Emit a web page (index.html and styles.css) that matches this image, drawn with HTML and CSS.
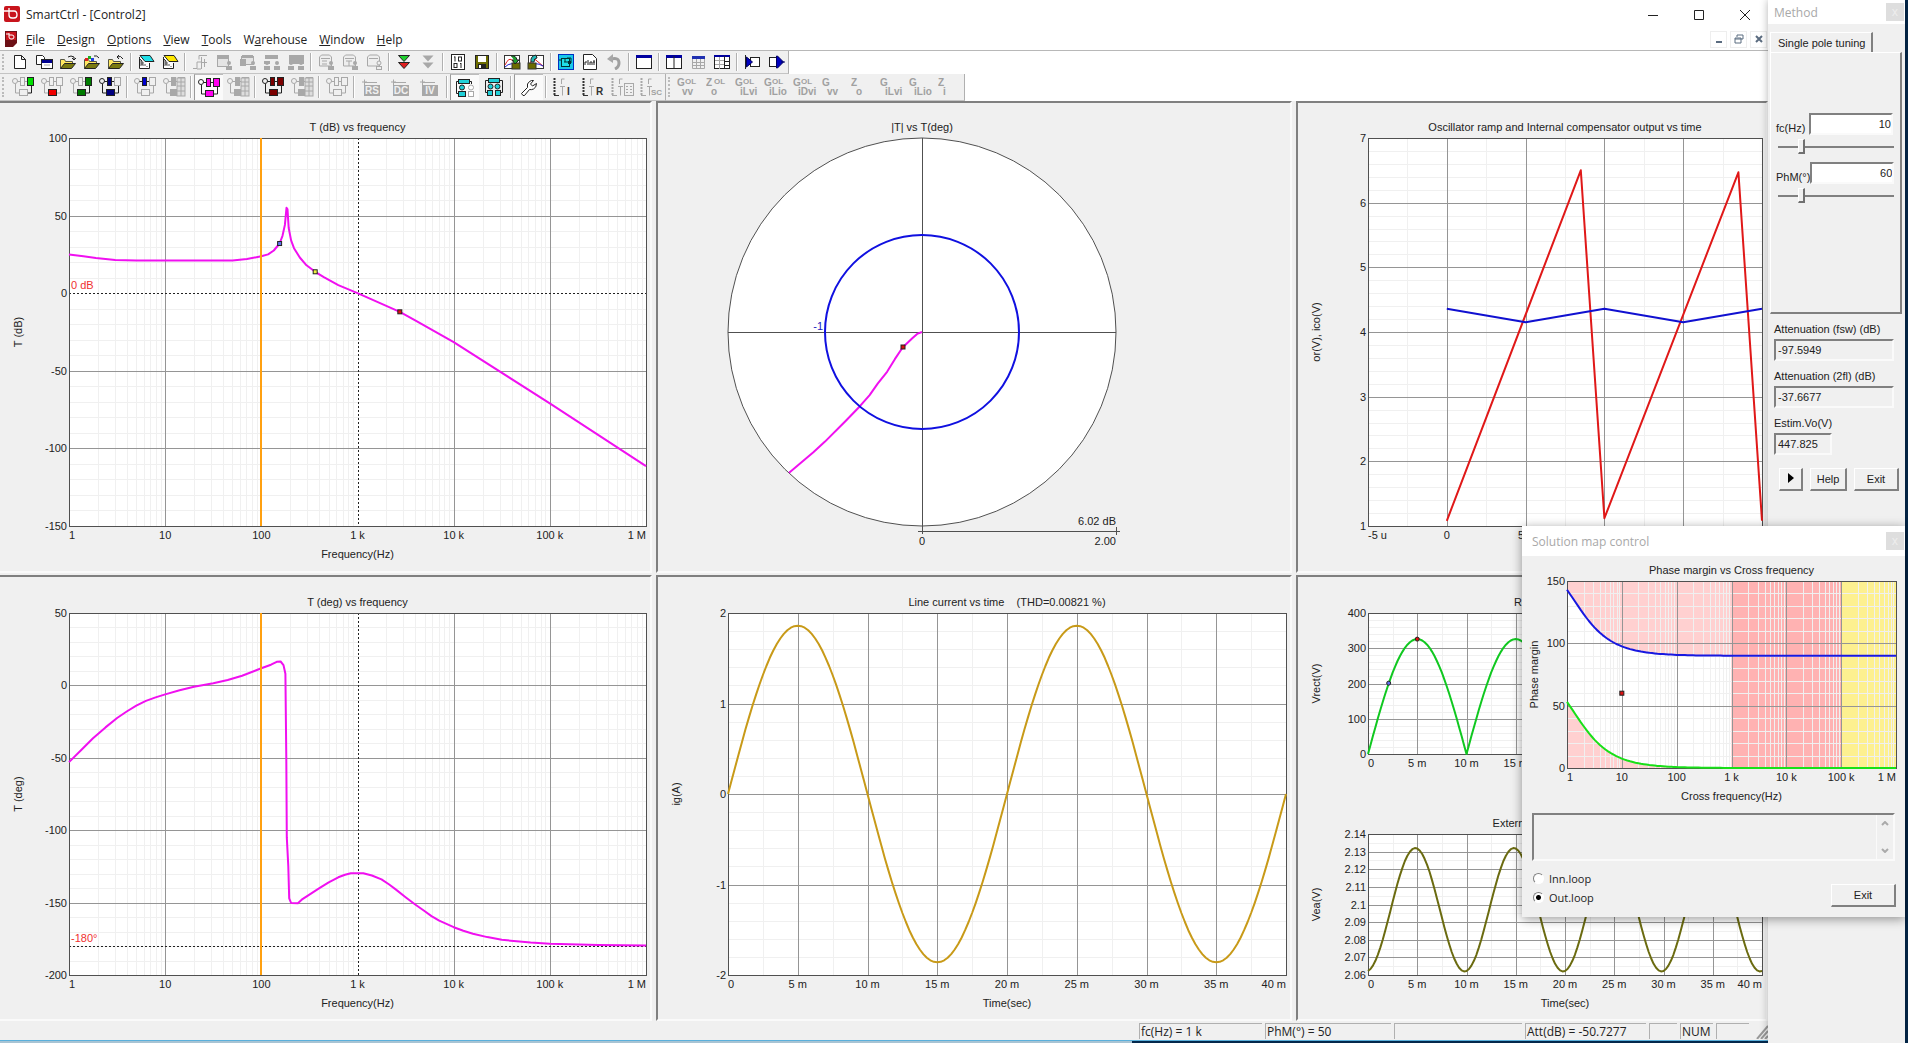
FILE: index.html
```html
<!DOCTYPE html>
<html lang="en">
<head>
  <meta charset="UTF-8">
  <meta name="viewport" content="width=device-width, initial-scale=1.0">
  <title>SmartCtrl - [Control2]</title>
  <link rel="stylesheet" href="styles.css">
</head>
<body>
  <div class="desktop">
    <main class="app">
      <header class="titlebar">
        <svg class="logo" viewBox="0 0 16 16"><rect width="16" height="16" rx="2" fill="#c8141c"/><path d="M0 5h5M5 2v7q0 3 3 3h2q3 0 3-3 0-4-3-4H5" fill="none" stroke="#fff" stroke-width="1.3"/></svg>
        <h1>SmartCtrl - [Control2]</h1>
        <div class="window-buttons">
          <button aria-label="Minimize"><svg viewBox="0 0 12 12"><path d="M1 6.5h10"/></svg></button>
          <button aria-label="Maximize"><svg viewBox="0 0 12 12"><path d="M1.5 1.5h9v9h-9z"/></svg></button>
          <button aria-label="Close"><svg viewBox="0 0 12 12"><path d="M1 1l10 10M11 1L1 11"/></svg></button>
        </div>
      </header>

      <nav class="menubar">
        <svg class="doc-logo" viewBox="0 0 12 16"><path d="M0 0h12v12l-4 4H0z" fill="#6c1016"/><path d="M1 1h10v8H1z" fill="#c8141c"/><path d="M1 3h3M4 2v4q0 2 2 2h1q2 0 2-2T7 4H4" fill="none" stroke="#fff"/></svg>
        <a href="#"><u>F</u>ile</a>
        <a href="#"><u>D</u>esign</a>
        <a href="#"><u>O</u>ptions</a>
        <a href="#"><u>V</u>iew</a>
        <a href="#"><u>T</u>ools</a>
        <a href="#">W<u>a</u>rehouse</a>
        <a href="#"><u>W</u>indow</a>
        <a href="#"><u>H</u>elp</a>
        <div class="mdi-buttons">
          <button aria-label="Minimize document"><svg viewBox="0 0 10 10"><path d="M2 8h6"/></svg></button>
          <button aria-label="Restore document"><svg viewBox="0 0 10 10"><path d="M3 3V1h6v4H7M1 4h6v5H1zM1 5h6" stroke-width="1"/></svg></button>
          <button aria-label="Close document"><svg viewBox="0 0 10 10"><path d="M2 2l6 6M8 2L2 8"/></svg></button>
        </div>
      </nav>

      <div class="toolbars">
        <div class="toolbar small" data-icons="new newWin open openMix openBack | sheetCyan sheetYellow | step mod1 mod2 mod3 mod4 | rep1 rep2 rep3 | arrows arrowsOff | bits save | chartOut chartIn | board script undo | win1 | win2 table win3 | plugL plugR"></div>
        <div class="toolbar-row">
          <div class="toolbar large" data-icons="treeGreen treeRed treeDark treeNavy | treeBlue gridOff | treeMagenta* gridOff | treeMaroon gridOff | treeOff | boxRS boxDC boxIV | cyan1* cyan2 | wrench* | axisI axisR axisGrid axisSC"></div>
          <div class="toolbar large" data-icons="g:G:OL:vv g:Z:OL:o g:G:OL:iLvi g:G:OL:iLio g:G:OL:iDvi g:G::vv g:Z::o g:G::iLvi g:G::iLio g:Z::i"></div>
        </div>
      </div>

      <section class="panels">
        <div class="panel"><svg class="chart" data-chart="gain"></svg></div>
        <div class="panel"><svg class="chart" data-chart="polar"></svg></div>
        <div class="panel"><svg class="chart" data-chart="ramp"></svg></div>
        <div class="panel"><svg class="chart" data-chart="phase"></svg></div>
        <div class="panel"><svg class="chart" data-chart="line"></svg></div>
        <div class="panel">
          <svg class="chart" data-chart="vrect"></svg>
          <svg class="chart" data-chart="vea"></svg>
        </div>
      </section>

      <footer class="statusbar">
        <span class="cell fc">fc(Hz) = 1 k</span>
        <span class="cell phm">PhM(°) = 50</span>
        <span class="cell spare"></span>
        <span class="cell att">Att(dB) = -50.7277</span>
        <span class="cell tiny"></span>
        <span class="cell key">NUM</span>
        <span class="cell key"></span>
        <svg class="size-grip" viewBox="0 0 12 14"><path d="M1 14L12 1M5 14l7-8M9 14l3-3" stroke="#999" stroke-width="2"/></svg>
      </footer>
      <div class="taskbar"></div>
    </main>

    <aside class="method">
      <div class="tool-title"><h2>Method</h2><button aria-label="Close">x</button></div>
      <div class="tabs"><button class="tab">Single pole tuning</button></div>
      <div class="tab-page">
        <div class="tuning">
          <label for="fc">fc(Hz)</label>
          <input type="text" id="fc" value="10">
        </div>
        <input type="range" aria-label="fc slider" min="0" max="100" value="18">
        <div class="tuning">
          <label for="phm">PhM(°)</label>
          <input type="text" id="phm" value="60">
        </div>
        <input type="range" aria-label="PhM slider" min="0" max="100" value="18">
      </div>
      <div class="results">
        <label for="attFsw">Attenuation (fsw) (dB)</label>
        <input type="text" id="attFsw" value="-97.5949" readonly>
        <label for="att2fl">Attenuation (2fl) (dB)</label>
        <input type="text" id="att2fl" value="-37.6677" readonly>
        <label for="estVo">Estim.Vo(V)</label>
        <input type="text" id="estVo" class="short" value="447.825" readonly>
      </div>
      <div class="actions">
        <button class="push play" aria-label="Run"><svg viewBox="0 0 6 10"><path d="M0 0l6 5-6 5z"/></svg></button>
        <button class="push help">Help</button>
        <button class="push exit">Exit</button>
      </div>
    </aside>

    <section class="solution">
      <div class="tool-title"><h2>Solution map control</h2><button aria-label="Close">x</button></div>
      <svg class="chart map" data-chart="map"></svg>
      <div class="log">
        <textarea aria-label="Messages" readonly></textarea>
        <div class="scroll">
          <svg viewBox="0 0 8 5"><path d="M1 4l3-3 3 3"/></svg>
          <svg viewBox="0 0 8 5"><path d="M1 1l3 3 3-3"/></svg>
        </div>
      </div>
      <div class="loops">
        <div class="radios">
          <label><input type="radio" name="loop"> Inn.loop</label>
          <label><input type="radio" name="loop" checked> Out.loop</label>
        </div>
        <button class="push">Exit</button>
      </div>
    </section>
  </div>
  <script src="script.js"></script>
</body>
</html>
```
FILE: styles.css
```css
* {
  box-sizing: border-box;
}

body {
  margin: 0;
  font-family: "Liberation Sans", Arial, sans-serif;
  font-size: 11px;
  color: #222;
  background: #04284c;
}

button,
input,
textarea {
  font: inherit;
  color: inherit;
}

h1,
h2 {
  margin: 0;
  font-weight: normal;
}

.desktop {
  position: relative;
  display: flex;
  height: 100vh;
  padding-right: 3px;
  overflow: hidden;
}

/* main window */
.app {
  flex: 1;
  min-width: 0;
  display: flex;
  flex-direction: column;
  background: #fff;
}

.titlebar,
.menubar,
.statusbar,
.tool-title {
  font-family: "Open Sans", "Noto Sans", sans-serif;
  font-size: 12px;
}

.titlebar {
  display: flex;
  align-items: center;
  height: 28px;
  padding: 0 0 0 4px;
}

.titlebar h1 {
  flex: 1;
  font-size: 12px;
  margin-left: 6px;
}

.logo {
  width: 16px;
  height: 16px;
}

.window-buttons {
  display: flex;
}

.window-buttons button {
  width: 46px;
  height: 28px;
  padding: 0;
  border: 0;
  background: none;
}

.window-buttons svg {
  width: 12px;
  height: 12px;
  fill: none;
  stroke: #222;
  vertical-align: middle;
}

.menubar {
  display: flex;
  align-items: center;
  height: 22px;
  padding: 0 1px 0 5px;
}

.menubar a {
  padding: 0 6px;
  color: #222;
  text-decoration: none;
}

.doc-logo {
  width: 12px;
  height: 16px;
  margin-right: 3px;
}

.mdi-buttons {
  display: flex;
  gap: 3px;
  margin-left: auto;
}

.mdi-buttons button {
  width: 17px;
  height: 17px;
  padding: 0;
  border: 1px solid #eee;
  background: #fff;
  line-height: 0;
}

.mdi-buttons svg {
  width: 10px;
  height: 10px;
  fill: none;
  stroke: #5b6c80;
  stroke-width: 2;
}

/* toolbars */
.toolbars {
  border-top: 1px solid #b8b8b8;
}

.toolbar-row {
  display: flex;
}

.toolbar {
  display: flex;
  width: max-content;
  background: #f0f0f0;
  border-right: 1px solid #b0b0b0;
  border-bottom: 1px solid #c4c4c4;
}

.toolbar::before {
  content: "";
  width: 3px;
  margin: 3px 1px 3px 2px;
  border-left: 2px dotted #bbb;
}

.toolbar button {
  display: flex;
  align-items: center;
  justify-content: center;
  padding: 0;
  border: 0;
  background: none;
}

.toolbar .pressed {
  background: #fafafa;
  border-left: 1px solid #999;
  border-top: 1px solid #bbb;
}

.small button {
  width: 24px;
  height: 22px;
}

.small svg {
  width: 18px;
  height: 16px;
}

.large button {
  width: 29px;
  height: 26px;
}

.large svg {
  width: 24px;
  height: 20px;
}

.separator {
  width: 2px;
  margin: 2px;
  border-left: 1px solid #b0b0b0;
  background: #fff;
}

.toolbar text {
  font-size: 10px;
  font-weight: bold;
  fill: #a0a0a0;
}

.toolbar .sup {
  font-size: 8px;
}

/* chart panels */
.panels {
  flex: 1;
  min-height: 0;
  display: grid;
  grid-template-columns: 652fr 636fr 472fr;
  grid-template-rows: 472fr 446fr;
  gap: 2px 4px;
  background: #f0f0f0;
}

.panel {
  display: flex;
  flex-direction: column;
  min-width: 0;
  min-height: 0;
  overflow: hidden;
  border: 2px solid;
  border-color: #808080 #fafafa #fafafa #808080;
}

.panel:nth-child(3n + 1) {
  border-left: 0;
}

.chart {
  display: block;
  flex: 1;
  width: 100%;
  min-height: 0;
}

.chart text {
  font-size: 11px;
  fill: #222;
}

.chart .red-text {
  fill: #f03030;
}

.chart .blue-text {
  fill: #2020c0;
}

.chart .minor,
.chart .major,
.chart .frame,
.chart .dotted {
  fill: none;
  shape-rendering: crispEdges;
}

.chart .minor {
  stroke: #f0f0f0;
}

.chart .major {
  stroke: #959595;
}

.chart .frame {
  stroke: #505050;
}

.chart .dotted {
  stroke: #222;
  stroke-dasharray: 2 2;
}

.chart .curve {
  fill: none;
  stroke-width: 2;
  stroke-linejoin: round;
}

/* status bar */
.statusbar {
  display: flex;
  justify-content: flex-end;
  gap: 3px;
  height: 19px;
  padding: 2px 0 1px;
  background: #f0f0f0;
}

.cell {
  padding-left: 1px;
  border-left: 1px solid #b0b0b0;
  border-top: 1px solid #b0b0b0;
  line-height: 15px;
  white-space: nowrap;
}

.fc {
  width: 123px;
}

.phm {
  width: 126px;
}

.spare {
  width: 128px;
}

.att {
  width: 121px;
}

.tiny {
  width: 28px;
}

.key {
  width: 33px;
}

.size-grip {
  width: 12px;
  height: 14px;
  margin-left: 4px;
  align-self: flex-end;
}

.taskbar {
  height: 3px;
  border-top: 1px solid #5ab0dc;
  background: linear-gradient(90deg, #a8c4d4 64%, #04284c 64%);
}

/* method window */
.method {
  width: 137px;
  background: #f0f0f0;
  box-shadow: 0 0 8px rgba(0, 0, 0, 0.3);
}

.tool-title {
  display: flex;
  align-items: center;
  justify-content: space-between;
  height: 24px;
  padding: 0 1px 0 6px;
  background: #fff;
  color: #a8a8a8;
}

.tool-title h2 {
  font-size: 12px;
}

.tool-title button {
  width: 18px;
  height: 18px;
  padding: 0;
  border: 0;
  background: #dedede;
  color: #eee;
  line-height: 16px;
}

.tabs {
  padding: 8px 2px 0;
}

.tab {
  height: 20px;
  padding: 0 6px 0 7px;
  border: 0;
  border-left: 1px solid #fff;
  border-top: 1px solid #fff;
  border-right: 2px solid #808080;
  background: #f0f0f0;
}

.tab-page {
  height: 262px;
  margin: 0 3px 0 2px;
  padding: 60px 7px 0 5px;
  border: 1px solid #fff;
  border-right: 2px solid #808080;
  border-bottom: 2px solid #808080;
}

.tuning {
  display: flex;
  align-items: flex-end;
  justify-content: space-between;
}

.method input[type="text"] {
  height: 22px;
  padding: 0 2px;
  border: 2px solid;
  border-color: #808080 #fafafa #fafafa #808080;
  border-radius: 0;
  background: #fff;
}

.tuning input[type="text"] {
  width: 84px;
  padding-right: 0;
  text-align: right;
}

.tab-page label {
  padding-bottom: 1px;
  white-space: nowrap;
}

input[type="range"] {
  display: block;
  appearance: none;
  width: 116px;
  height: 15px;
  margin: 4px 0 8px 2px;
  background: linear-gradient(#808080, #808080) center / 100% 2px no-repeat;
}

input[type="range"]::-webkit-slider-thumb {
  appearance: none;
  width: 7px;
  height: 15px;
  border: 1px solid #fff;
  border-right: 2px solid #707070;
  border-bottom: 2px solid #707070;
  background: #f0f0f0;
}

.results {
  display: flex;
  flex-direction: column;
  align-items: flex-start;
  padding: 9px 9px 0 6px;
}

.results label {
  line-height: 13px;
  margin-bottom: 3px;
}

.results input[type="text"] {
  width: 120px;
  margin-bottom: 9px;
  background: #f0f0f0;
}

.results input.short {
  width: 58px;
}

.actions {
  display: flex;
  justify-content: space-between;
  padding: 4px 6px 0 11px;
}

.push {
  height: 23px;
  padding: 0;
  border: 1px solid #fff;
  border-right: 2px solid #808080;
  border-bottom: 2px solid #808080;
  background: #f0f0f0;
}

.play {
  width: 24px;
}

.play svg {
  width: 6px;
  height: 10px;
  fill: #000;
}

.help {
  width: 37px;
}

.exit {
  width: 45px;
}

/* solution map window, floats over the charts */
.solution {
  position: absolute;
  top: 526px;
  right: 3px;
  width: 383px;
  background: #f0f0f0;
  box-shadow: 0 2px 10px rgba(0, 0, 0, 0.4);
}

.solution .tool-title {
  height: 30px;
  padding-left: 10px;
}

.chart.map {
  height: 257px;
}

.log {
  display: flex;
  height: 48px;
  margin: 0 10px;
  border: 2px solid;
  border-color: #808080 #fafafa #fafafa #808080;
}

.log textarea {
  flex: 1;
  min-width: 0;
  padding: 0;
  border: 0;
  resize: none;
  background: #f0f0f0;
}

.scroll {
  display: flex;
  flex-direction: column;
  justify-content: space-between;
  width: 17px;
  padding: 6px 4px;
  border-left: 1px solid #fafafa;
}

.scroll svg {
  width: 8px;
  height: 5px;
  fill: none;
  stroke: #aaa;
  stroke-width: 2;
}

.loops {
  display: flex;
  justify-content: space-between;
  align-items: flex-end;
  padding: 8px 9px 10px 11px;
}

.loops .push {
  width: 65px;
}

.radios {
  display: flex;
  flex-direction: column;
  font-family: "Open Sans", "Noto Sans", sans-serif;
}

.radios label {
  display: flex;
  align-items: center;
  gap: 5px;
  height: 19px;
}

input[type="radio"] {
  appearance: none;
  width: 11px;
  height: 11px;
  margin: 0;
  border: 1px solid;
  border-color: #808080 #fff #fff #808080;
  border-radius: 50%;
  background: #fff;
}

input[type="radio"]:checked {
  background: radial-gradient(#000 2px, #fff 3px);
}
```
FILE: script.js
```js
// ---------- toolbar icons ----------
const GRAY = '#a8a8a8';

function r(x, y, w, h, fill, stroke) {
  return `<rect x="${x}" y="${y}" width="${w}" height="${h}" fill="${fill || 'none'}" stroke="${stroke || 'none'}"/>`;
}

function p(d, stroke, fill) {
  return `<path d="${d}" fill="${fill || 'none'}" stroke="${stroke || 'none'}"/>`;
}

// block diagram: source circle, two blocks on top and one feedback block below
function tree(a, b, c, circle, fillCircle) {
  const k = col => col ? '#222' : GRAY;
  return `<circle cx="4" cy="4" r="2.5" fill="${fillCircle || '#f0f0f0'}" stroke="${k(circle)}"/>`
    + p('M6.5 4.5H10M14 4.5h3', k(a || circle)) + p('M4.5 7v9H9', k(circle || (a && c))) + p('M20.5 8v8H16', k(b || (a && c)))
    + r(9.5, 0.5, 4, 8, a || '#f0f0f0', k(a)) + r(16.5, 0.5, 6, 8, b || '#f0f0f0', k(b))
    + r(8.5, 12.5, 8, 6, c || '#f0f0f0', k(c));
}

function folder(extra) {
  return p('M1.5 14.5v-9h4l1 2h7v2', '#554', '#ffe860') + p('M1.5 14.5l4-5h11l-4 5z', '#222', '#7a7a10') + extra;
}

function sheet(color) {
  return p('M2.5 3v11.5h10V9', '#222', '#fff') + p('M4 6v6M6 8v4M8 10v2M10 12v1', '#555')
    + p('M3 1.5h10l4 6H8z', '#222', color) + p('M2 4l3 3v4', '#333');
}

function person(x) {
  return `<circle cx="${x}" cy="9" r="2" fill="${GRAY}"/>` + r(x - 3, 12, 6, 4, GRAY);
}

function axis(letter) {
  return p('M2.5 1v17', '#333').replace('/>', ' stroke-width="2" stroke-dasharray="2 1"/>') + p('M2 18.5h5', '#333')
    + p('M9.5 7V2h3M8 9.5h5M10.5 9.5v9', GRAY) + `<text x="15" y="18" style="fill:#333">${letter}</text>`;
}

function box(label) {
  return p('M4.5 9V2.5M2 5l5 0M5 5.5h12', GRAY) + r(4, 8, 16, 11, GRAY)
    + `<text x="12" y="17" text-anchor="middle" style="fill:#f0f0f0">${label}</text>`;
}

// transfer function names: letter, superscript, subscript
function gainIcon(spec) {
  const [, letter, sup, sub] = spec.split(':');
  return `<text x="0" y="9">${letter}</text><text class="sup" x="8" y="7">${sup}</text><text x="5" y="18">${sub}</text>`;
}

const grid = r(15, 1, 8, 18, '#ddd', GRAY) + p('M15 5h8M15 9h8M15 14h8M19 1v18', GRAY);
const curves = r(1.5, 1.5, 15, 13, '#fff', '#333') + p('M2 11q4-9 8-4l6 5', '#e02020') + p('M2 13q6-6 14-1', '#2020d0');

const icons = {
  new: p('M3.5 1.5h7l4 4v9h-11zM10.5 1.5v4h4', '#222', '#fff'),
  newWin: p('M1.5 1.5h6l2 2v7h-8z', '#222', '#fff') + r(6.5, 5.5, 11, 9, '#fff', '#222') + r(7, 6, 10, 3, '#000090') + p('M9 11h6', GRAY),
  open: folder(p('M9 3q3-2 6 0v3M13 4l2 2 2-2', '#222')),
  openMix: folder(r(2, 4, 3, 3, '#e02020') + r(5, 2, 3, 3, '#20b020') + r(8, 4, 3, 3, '#2040e0') + p('M11 2q3-1 5 2', '#222')),
  openBack: folder(p('M16 5q-2-4-6-2M12 1l-2 2 2 2', '#222')),
  sheetCyan: sheet('#20e0e8'),
  sheetYellow: sheet('#ffe800'),
  step: p('M2 14.5h4V8h4M8 5.5V1.5h8M10.5 3v12M6 15h4M13.5 5v8M10 8.5h6', GRAY),
  mod1: r(2.5, 3.5, 11, 9, '#e4e4e4', GRAY) + r(2, 1, 12, 4, GRAY) + person(14),
  mod2: r(2.5, 2.5, 12, 8, '#e4e4e4', GRAY) + r(1, 5, 6, 7, GRAY) + r(3, 1, 11, 3, GRAY) + person(14),
  mod3: r(2, 1, 13, 4, GRAY) + r(1, 7, 6, 3, GRAY) + person(4) + person(14),
  mod4: r(2, 1, 15, 9, GRAY) + person(4) + person(14),
  rep1: p('M2.5 3l2-2h8l2 2v9h-12z', GRAY, '#eee') + p('M4 4.5h9M5 7h5M5 10h5', GRAY) + person(14),
  rep2: p('M2.5 3l2-2h8l2 2v9h-12z', GRAY, '#eee') + p('M4 4.5h9M5 7h6M8 7v5', GRAY) + person(14),
  rep3: p('M2.5 3l2-2h8l2 2v9h-12z', GRAY, '#eee') + p('M4 4.5h9', GRAY) + '<circle cx="14" cy="9" r="2" fill="#eee" stroke="#a8a8a8"/>' + r(11.5, 12.5, 5, 3, '#eee', GRAY),
  arrows: p('M3.5 1.5h11l-5.5 6z', '#222', '#20d030') + p('M3.5 8.5h11l-5.5 6z', '#222', '#e02020'),
  arrowsOff: p('M3.5 1.5h11l-5.5 6z', 'none', GRAY) + p('M3.5 8.5h11l-5.5 6z', 'none', GRAY),
  bits: r(2.5, 0.5, 13, 15, '#fff', '#222') + p('M6 2.5v5M5 3h1', '#222') + r(9.5, 3, 3, 4, 'none', '#222') + p('M12 9v5M11 9.5h1', '#222') + r(5, 9.5, 3, 4, '#fff', '#222'),
  save: r(2.5, 1.5, 13, 13, '#6b6b00', '#222') + r(5, 2, 8, 6, '#fff') + r(5, 10, 8, 5, '#222') + r(6, 11, 2, 3, '#fff'),
  chartOut: curves + r(9, 9, 8, 6, '#6b6b00', '#333') + p('M8 2q5-1 6 4h2l-4 4-3-4h2', '#222', '#20a030'),
  chartIn: curves + r(1, 9, 8, 6, '#6b6b00', '#333') + p('M4 8q-1-6 5-7l1 3q-3 0-3 4z', '#222', '#20b8b8'),
  board: r(1.5, 0.5, 15, 15, '#18c8e8', '#0030c0') + r(4.5, 4.5, 8, 8, '#20e0e8', '#033') + p('M2 6h3M10 4h4v5h-3M7 8h4M8 5v3', '#033') + r(11, 7, 3, 3, '#033'),
  script: p('M2.5 0.5h9l4 4v11h-13z', '#222', '#fff') + p('M4 11V8h2M7 11V6M9 11V8h2v3M13 6v5M12 8h2', '#222'),
  undo: '<path d="M6 5q8-2 8 4 0 4-4 6" fill="none" stroke="#a0a0a0" stroke-width="3"/>' + p('M8 0v9L2 5z', 'none', GRAY),
  win1: r(1.5, 1.5, 15, 13, '#fff', '#222') + r(1, 1, 16, 3, '#0000a0'),
  win2: r(1.5, 1.5, 15, 13, '#fff', '#222') + r(1, 1, 16, 3, '#0000a0') + p('M9 2v13', '#222'),
  table: r(3, 2, 13, 3, '#2030b0') + p('M3.5 5v9.5h12V5M3.5 8.5h12M3.5 11.5h12M7.5 5v9M11.5 5v9', GRAY, 'none'),
  win3: r(1.5, 1.5, 15, 13, '#fff', '#222') + r(1, 1, 16, 2, '#0000a0') + p('M6.5 3v12M2 6.5h9M2 10.5h9', GRAY) + p('M11.5 2v13M12 7.5h5M12 11.5h5', '#222'),
  plugL: r(7.5, 3.5, 9, 9, '#fff', '#222') + p('M3.5 3v10l6-5z', '#000060', '#0000c0') + p('M2.5 1v14', '#222'),
  plugR: r(2.5, 3.5, 9, 9, '#fff', '#222') + p('M9.5 2v12h1l6-6-6-6zM14 8h4', '#000060', '#0000c0'),

  treeGreen: tree(null, '#00e000', null),
  treeRed: tree(null, null, '#f00000'),
  treeDark: tree(null, '#007c00', '#007c00'),
  treeNavy: tree('#000080', null, '#000080', true),
  treeBlue: tree('#0000d0', null, null),
  treeMagenta: tree('#ff00f0', '#ff00f0', '#ff00f0', true, '#fff'),
  treeMaroon: tree('#7c0000', '#7c0000', '#7c0000', true),
  treeOff: tree(null, null, null),
  gridOff: tree(GRAY, null, GRAY).replaceAll('#222', GRAY) + grid,
  boxRS: box('RS'),
  boxDC: box('DC'),
  boxIV: box('IV'),
  cyan1: r(5.5, 1.5, 11, 4, '#20d0d8', '#222') + p('M5.5 3.5h-2v12h2M16.5 3.5h2V6', '#222') + '<circle cx="9" cy="9.5" r="2.5" fill="#20d0d8" stroke="#222"/>'
    + r(5.5, 13.5, 7, 5, '#20d0d8', '#222') + '<circle cx="18" cy="9.5" r="2.5" fill="#fff" stroke="#a8a8a8"/>' + r(15.5, 13.5, 5, 5, '#fff', GRAY),
  cyan2: r(6.5, 1.5, 11, 4, '#20d0d8', '#222') + p('M6.5 3.5h-3v12h2M17.5 3.5h3v12h-2', '#222')
    + '<circle cx="8.500" cy="9.5" r="2.5" fill="#20d0d8" stroke="#222"/><circle cx="15.5" cy="9.5" r="2.5" fill="#20d0d8" stroke="#222"/>'
    + r(5.5, 13.5, 5, 5, '#20d0d8', '#222') + r(13.5, 13.5, 5, 5, '#20d0d8', '#222'),
  wrench: p('M6 17.5l-1.5-2 6-6q-1-4 2-6 2-1.5 4-1l-3 3.5 2 2 4-2.5q0 4-3 5.5-2 1-4 .5l-5 6z', '#222', '#fff'),
  axisI: axis('I'),
  axisR: axis('R'),
  axisGrid: axis('').replaceAll('#333', GRAY) + r(14.5, 6.5, 9, 12, 'none', GRAY) + p('M16 9.5h2M20 9.5h2M16 12.5h2M20 12.5h2M16 15.5h2M20 15.5h2', GRAY),
  axisSC: axis('').replaceAll('#333', GRAY) + '<text class="sup" x="12" y="18">SC</text>'
};

document.querySelectorAll('.toolbar').forEach(bar => {
  bar.dataset.icons.split(' ').forEach(item => {
    if (item === '|') {
      bar.insertAdjacentHTML('beforeend', '<span class="separator"></span>');
      return;
    }
    const name = item.replace('*', '');
    const body = name.startsWith('g:') ? gainIcon(name) : icons[name];
    const size = bar.classList.contains('small') ? '0 0 18 16' : '0 0 24 20';
    const state = item.endsWith('*') ? 'pressed' : '';
    bar.insertAdjacentHTML('beforeend', `<button class="${state}" aria-label="${name}"><svg viewBox="${size}">${body}</svg></button>`);
  });
});

// ---------- charts ----------
const decades = ['1', '10', '100', '1 k', '10 k', '100 k', '1 M'];

function sample(from, to, n, fn) {
  const pts = [];
  for (let i = 0; i <= n; i++) {
    const x = from + (to - from) * i / n;
    pts.push([x, fn(x)]);
  }
  return pts;
}

const millis = ['0', '5 m', '10 m', '15 m', '20 m', '25 m', '30 m', '35 m', '40 m'];
const lag = u => Math.atan(1.33 / Math.pow(10, u)) * 180 / Math.PI;

const charts = {
  gain: {
    title: 'T (dB) vs frequency', xlabel: 'Frequency(Hz)', ylabel: 'T (dB)', margin: [35, 4, 45, 69],
    log: true, x: [0, 6], xticks: decades, y: [-150, 100], yticks: ['-150', '-100', '-50', '0', '50', '100'], ysub: 5,
    vline: 2, dotX: 3, dotY: 0, note: '0 dB',
    curves: [{ color: '#f010f0', pts: [[0, 25], [0.15, 23.8], [0.28, 22.7], [0.48, 21.4], [0.7, 21], [1.7, 21], [1.85, 22], [2, 23.8], [2.07, 25], [2.13, 27.5], [2.19, 32], [2.22, 37], [2.245, 44], [2.262, 55], [2.272, 54], [2.285, 42], [2.31, 34], [2.34, 29], [2.4, 23], [2.47, 18], [2.56, 13.8], [2.65, 10.3], [2.8, 5.2], [3, 0], [3.2, -5.5], [3.44, -12], [3.6, -17.5], [4, -31.5], [5, -71], [6, -111.5]] }],
    marks: [[2.19, 32, '#6070f0'], [2.56, 13.8, '#f0f040'], [3.44, -12, '#e01010']]
  },
  phase: {
    title: 'T (deg) vs frequency', xlabel: 'Frequency(Hz)', ylabel: 'T (deg)', margin: [36, 4, 44, 69],
    log: true, x: [0, 6], xticks: decades, y: [-200, 50], yticks: ['-200', '-150', '-100', '-50', '0', '50'], ysub: 5,
    vline: 2, dotX: 3, dotY: -180, note: '-180°',
    curves: [{ color: '#f010f0', pts: [[0, -53], [0.13, -44.5], [0.25, -36.5], [0.38, -29], [0.5, -22.5], [0.6, -18], [0.7, -14], [0.8, -10.7], [0.9, -8.3], [1, -6.2], [1.15, -3.4], [1.3, -1], [1.5, 1.5], [1.65, 3.7], [1.8, 6.7], [2, 11.8], [2.1, 14.3], [2.16, 16.3], [2.2, 16.5], [2.23, 14], [2.25, 8], [2.26, -50], [2.265, -105], [2.28, -125], [2.29, -147], [2.31, -150.3], [2.38, -150.5], [2.42, -148], [2.5, -144.5], [2.6, -140.2], [2.7, -136], [2.8, -132.5], [2.87, -130.8], [2.93, -129.7], [3.06, -129.7], [3.15, -131.3], [3.25, -134], [3.33, -137.5], [3.4, -141], [3.5, -146.3], [3.6, -151.3], [3.7, -156], [3.77, -159.3], [3.85, -162.5], [4, -167], [4.1, -169.5], [4.2, -171.5], [4.35, -173.8], [4.5, -175.7], [4.8, -177.6], [5, -178.4], [5.5, -179.2], [6, -179.6]] }]
  },
  ramp: {
    title: 'Oscillator ramp and Internal compensator output vs time', xlabel: 'Time(sec)', ylabel: 'or(V), ico(V)', margin: [35, 4, 45, 70],
    x: [-5, 20], xticks: ['-5 u', '0', '5 u', '10 u', '15 u', '20 u'], xsub: 2, y: [1, 7], yticks: ['1', '2', '3', '4', '5', '6', '7'], ysub: 5,
    curves: [
      { color: '#e01818', pts: [[0, 1.08], [8.5, 6.5], [10, 1.12], [18.5, 6.47], [20, 1.08]] },
      { color: '#1010d0', pts: [[0, 4.36], [5, 4.15], [10, 4.36], [15, 4.15], [20, 4.36]] }
    ]
  },
  line: {
    title: 'Line current vs time \u00a0 \u00a0(THD=0.00821 %)', xlabel: 'Time(sec)', ylabel: 'ig(A)', margin: [36, 4, 44, 70],
    x: [0, 40], xticks: millis, xsub: 2, y: [-2, 2], yticks: ['-2', '-1', '0', '1', '2'], ysub: 5,
    curves: [{ color: '#c89a18', pts: sample(0, 40, 160, t => 1.86 * Math.sin(Math.PI * t / 10)) }]
  },
  vrect: {
    title: 'Rect. voltage vs time', ylabel: 'Vrect(V)', margin: [36, 4, 44, 70],
    x: [0, 40], xticks: millis, xsub: 2, y: [0, 400], yticks: ['0', '100', '200', '300', '400'], ysub: 5,
    curves: [{ color: '#10c820', pts: sample(0, 40, 160, t => 326 * Math.abs(Math.sin(Math.PI * t / 10))) }],
    dots: [[2.1, 201, '#6070f0'], [5, 326, '#e01010']]
  },
  vea: {
    title: 'External compensator vs time', xlabel: 'Time(sec)', ylabel: 'Vea(V)', margin: [36, 4, 44, 70],
    x: [0, 40], xticks: millis, xsub: 2, y: [2.06, 2.14], yticks: ['2.06', '2.07', '2.08', '2.09', '2.1', '2.11', '2.12', '2.13', '2.14'], ysub: 2,
    curves: [{ color: '#6b6b10', pts: sample(0, 40, 160, t => 2.097 - 0.035 * Math.cos(Math.PI * (t + 0.2) / 5)) }]
  },
  map: {
    title: 'Phase margin vs Cross frequency', xlabel: 'Cross frequency(Hz)', ylabel: 'Phase margin', margin: [25, 9, 45, 45], ylabelX: 12,
    log: true, x: [0, 6], xticks: decades, y: [0, 150], yticks: ['0', '50', '100', '150'], ysub: 5,
    areas: [
      { color: '#ffd0d0', pts: [...sample(0, 3, 60, u => 90 + lag(u)), [3, 150], [0, 150]] },
      { color: '#ffd0d0', pts: [...sample(0, 3, 60, lag), [3, 0], [0, 0]] },
      { color: '#ffb2b2', pts: [[3, 0], [5, 0], [5, 150], [3, 150]] },
      { color: '#fdf090', pts: [[5, 0], [6, 0], [6, 150], [5, 150]] }
    ],
    curves: [
      { color: '#1818e0', pts: sample(0, 6, 120, u => 90 + lag(u)) },
      { color: '#18e018', pts: sample(0, 6, 120, lag) }
    ],
    marks: [[1, 60, '#e01010']]
  }
};

function text(x, y, str, anchor, cls) {
  return `<text x="${x}" y="${y}" text-anchor="${anchor}" class="${cls || ''}">${str}</text>`;
}

function drawChart(svg, c) {
  const [mt, mr, mb, ml] = c.margin;
  const right = svg.clientWidth - mr;
  const bottom = svg.clientHeight - mb;
  const px = v => ml + (v - c.x[0]) / (c.x[1] - c.x[0]) * (right - ml);
  const py = v => bottom - (v - c.y[0]) / (c.y[1] - c.y[0]) * (bottom - mt);
  const path = pts => pts.map((q, i) => (i ? 'L' : 'M') + px(q[0]).toFixed(1) + ' ' + py(q[1]).toFixed(1)).join('');
  const vert = v => `M${Math.round(px(v)) + 0.5} ${mt}V${bottom}`;
  const horz = v => `M${ml} ${Math.round(py(v)) + 0.5}H${right}`;
  let minor = '', major = '';

  const nx = c.xticks.length - 1;
  const ny = c.yticks.length - 1;
  const dx = (c.x[1] - c.x[0]) / nx;
  const dy = (c.y[1] - c.y[0]) / ny;
  for (let i = 0; i < nx; i++) {
    const v = c.x[0] + i * dx;
    if (i && v !== c.dotX) major += vert(v);
    if (c.log) {
      for (let k = 2; k < 10; k++) minor += vert(v + Math.log10(k));
    } else {
      for (let k = 1; k < c.xsub; k++) minor += vert(v + dx * k / c.xsub);
    }
  }
  for (let i = 0; i < ny; i++) {
    const v = c.y[0] + i * dy;
    if (i && v !== c.dotY) major += horz(v);
    for (let k = 1; k < c.ysub; k++) minor += horz(v + dy * k / c.ysub);
  }

  let out = `<rect x="${ml}" y="${mt}" width="${right - ml}" height="${bottom - mt}" fill="#fff"/>`;
  (c.areas || []).forEach(a => out += `<path d="${path(a.pts)}Z" fill="${a.color}"/>`);
  out += `<path class="minor" d="${minor}"/><path class="major" d="${major}"/>`;
  if (c.dotX !== undefined) out += `<path class="dotted" d="${vert(c.dotX)}${horz(c.dotY)}"/>`;
  out += `<rect class="frame" x="${ml + 0.5}" y="${mt + 0.5}" width="${right - ml}" height="${bottom - mt}"/>`;
  c.curves.forEach(k => out += `<path class="curve" stroke="${k.color}" d="${path(k.pts)}"/>`);
  if (c.vline) out += `<path d="M${Math.round(px(c.vline))} ${mt}V${bottom}" stroke="#ffa010" stroke-width="2"/>`;
  (c.marks || []).forEach(m => out += `<rect x="${px(m[0]) - 2}" y="${py(m[1]) - 2}" width="4" height="4" fill="${m[2]}" stroke="#222"/>`);
  (c.dots || []).forEach(m => out += `<circle cx="${px(m[0])}" cy="${py(m[1])}" r="2" fill="${m[2]}" stroke="#222"/>`);
  if (c.note) out += text(ml + 2, py(c.dotY) - 4, c.note, 'start', 'red-text');

  const mid = (ml + right) / 2;
  out += text(mid, mt - 7, c.title, 'middle');
  c.xticks.forEach((t, i) => {
    const anchor = i === 0 ? 'start' : i === nx ? 'end' : 'middle';
    out += text(px(c.x[0] + i * dx), bottom + 13, t, anchor);
  });
  c.yticks.forEach((t, i) => out += text(ml - 2, py(c.y[0] + i * dy) + 4, t, 'end'));
  if (c.xlabel) out += text(mid, bottom + 32, c.xlabel, 'middle');
  out += `<text text-anchor="middle" transform="translate(${(c.ylabelX || 18) + 4} ${(mt + bottom) / 2}) rotate(-90)">${c.ylabel}</text>`;
  svg.innerHTML = out;
}

function drawPolar(svg) {
  const rad = (svg.clientHeight - 80) / 2;
  const cx = 70 + rad;
  const cy = 35 + rad;
  const pts = [[0, 0], [-0.05, -0.02], [-0.1, -0.065], [-0.2, -0.16], [-0.28, -0.28], [-0.36, -0.41], [-0.455, -0.53], [-0.54, -0.65], [-0.64, -0.765], [-0.78, -0.91], [-1, -1.13], [-1.12, -1.24], [-1.37, -1.45]];
  const d = pts.map((q, i) => (i ? 'L' : 'M') + (cx + q[0] * rad / 2) + ' ' + (cy - q[1] * rad / 2)).join('');
  const base = cy + rad + 5;
  svg.innerHTML = `<circle cx="${cx}" cy="${cy}" r="${rad}" fill="#fff" stroke="#505050"/>
    <path class="frame" d="M${cx - rad} ${cy}H${cx + rad}M${cx} ${cy - rad}V${base + 3}M${cx - 4} ${base}H${cx + rad + 4}M${cx + rad} ${base - 4}v8"/>
    <path class="curve" stroke="#f010f0" d="${d}"/>
    <circle class="curve" cx="${cx}" cy="${cy}" r="${rad / 2}" stroke="#1010e0"/>
    <rect x="${cx - 21}" y="${cy + 13}" width="4" height="4" fill="#e01010" stroke="#222"/>`
    + text(cx, 28, '|T| vs T(deg)', 'middle')
    + text(cx - rad / 2 - 2, cy - 2, '-1', 'end', 'blue-text')
    + text(cx + rad, base - 6, '6.02 dB', 'end')
    + text(cx, base + 14, '0', 'middle')
    + text(cx + rad, base + 14, '2.00', 'end');
}

function drawAll() {
  document.querySelectorAll('.chart').forEach(svg => {
    if (svg.dataset.chart === 'polar') drawPolar(svg);
    else drawChart(svg, charts[svg.dataset.chart]);
  });
}

drawAll();
window.addEventListener('resize', drawAll);
```
